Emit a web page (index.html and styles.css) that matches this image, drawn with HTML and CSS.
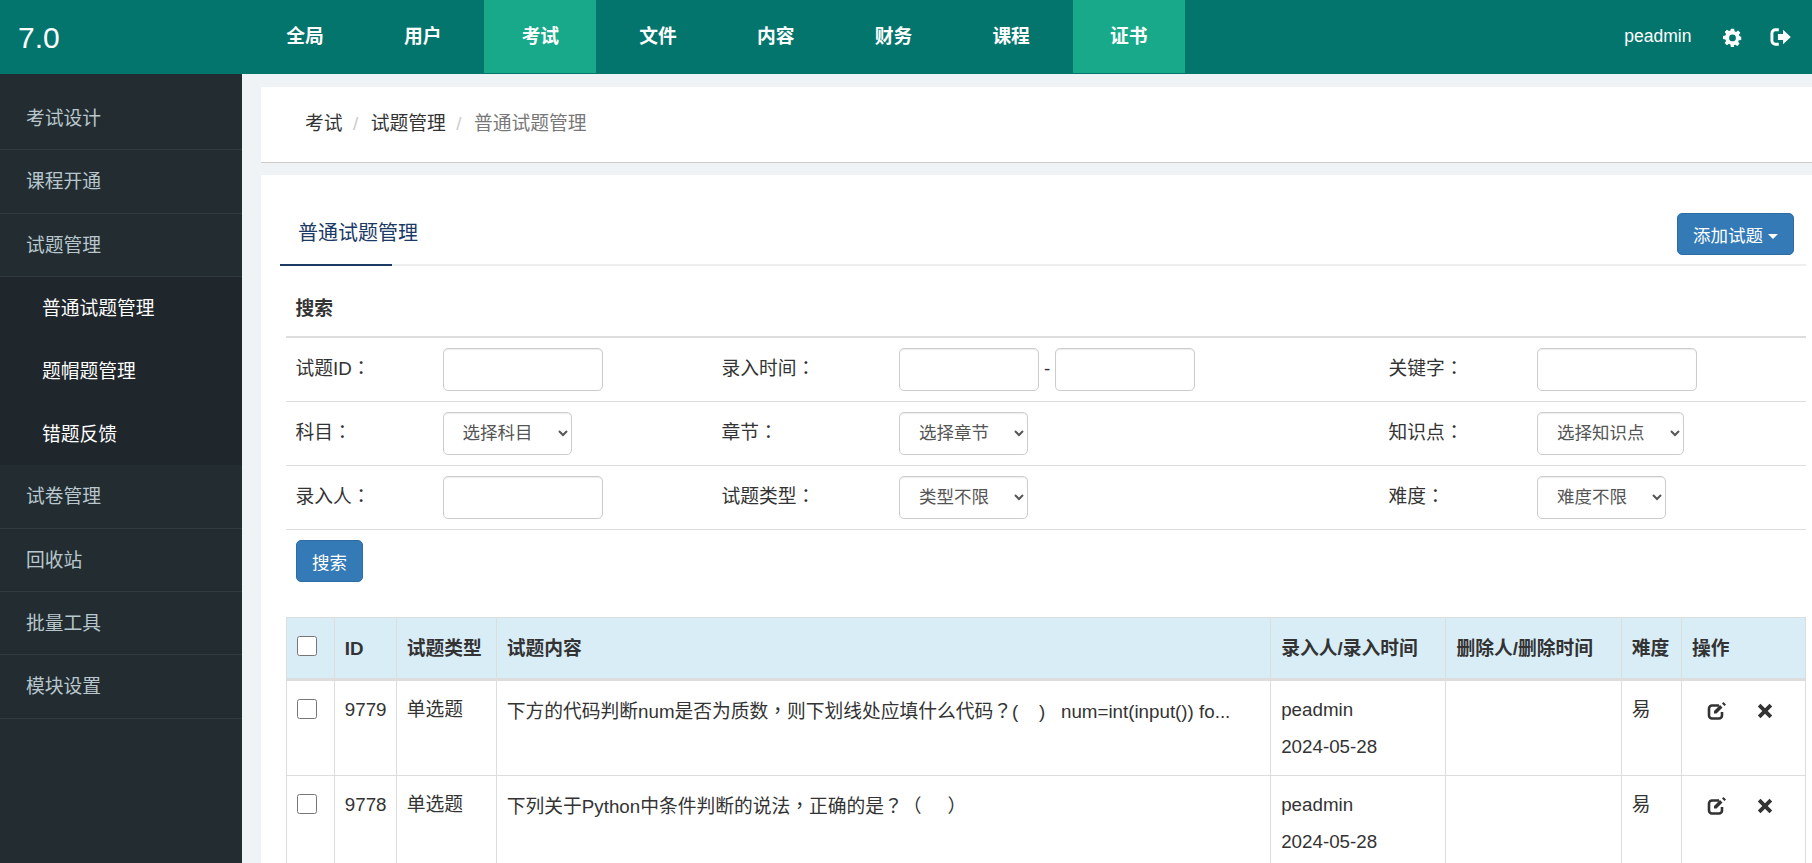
FILE: index.html
```html
<!DOCTYPE html>
<html lang="zh-CN">
<head>
  <meta charset="UTF-8" />
  <title>普通试题管理</title>
  <link rel="stylesheet" href="styles.css">
</head>
<body>

  <!-- 顶部导航 -->
  <header class="navbar">
    <a class="brand">7.0</a>
    <nav class="nav-menu">
      <a>全局</a>
      <a>用户</a>
      <a class="active">考试</a>
      <a>文件</a>
      <a>内容</a>
      <a>财务</a>
      <a>课程</a>
      <a class="active">证书</a>
    </nav>
    <div class="nav-user">
      <span class="user-name">peadmin</span>
      <svg class="nav-icon" viewBox="0 0 24 24" width="19" height="19"><path fill="#fff" fill-rule="evenodd" d="M10 1h4l.6 3.1 1.9.8 2.6-1.8 2.8 2.8-1.8 2.6.8 1.9L23 11v4l-3.1.5-.8 1.9 1.8 2.6-2.8 2.8-2.6-1.8-1.9.8L13.9 24h-4l-.5-3.2-1.9-.8-2.6 1.8-2.8-2.8 1.8-2.6-.8-1.9L0 14v-4l3.1-.6.8-1.9-1.8-2.6 2.8-2.8 2.6 1.8 1.9-.8zM12 8.2a4.3 4.3 0 1 0 0 8.6 4.3 4.3 0 0 0 0-8.6z"/></svg>
      <svg class="nav-icon" viewBox="0 0 24 21" width="21" height="18"><path fill="none" stroke="#fff" stroke-width="3.4" d="M10 2H6a4 4 0 0 0-4 4v9a4 4 0 0 0 4 4h4"/><path fill="#fff" d="M9 7h6V2l9 8.500-9 8.500v-5H9z"/></svg>
    </div>
  </header>

  <div class="layout">
    <!-- 左侧菜单 -->
    <aside class="sidebar">
      <a class="side-item">考试设计</a>
      <a class="side-item">课程开通</a>
      <a class="side-item">试题管理</a>
      <div class="side-sub">
        <a>普通试题管理</a>
        <a>题帽题管理</a>
        <a>错题反馈</a>
      </div>
      <a class="side-item">试卷管理</a>
      <a class="side-item">回收站</a>
      <a class="side-item">批量工具</a>
      <a class="side-item">模块设置</a>
    </aside>

    <main class="main">
      <div class="crumb-card">
        <a>考试</a><span class="sep">/</span><a>试题管理</a><span class="sep">/</span><span class="crumb-now">普通试题管理</span>
      </div>

      <section class="panel">
        <div class="tabs">
          <a class="tab active">普通试题管理</a>
          <button class="btn btn-add">添加试题 <span class="caret"></span></button>
        </div>

        <div class="search-title">搜索</div>
        <div class="search-grid">
          <div class="search-row">
            <label>试题ID<span class="punct">：</span></label>
            <div class="cell"><input class="field" type="text"></div>
            <label>录入时间<span class="punct">：</span></label>
            <div class="cell"><input class="field field-date" type="text"><span class="dash">-</span><input class="field field-date" type="text"></div>
            <label>关键字<span class="punct">：</span></label>
            <div class="cell"><input class="field" type="text"></div>
          </div>
          <div class="search-row">
            <label>科目<span class="punct">：</span></label>
            <div class="cell"><select class="field sel-w1"><option>选择科目</option></select></div>
            <label>章节<span class="punct">：</span></label>
            <div class="cell"><select class="field sel-w1"><option>选择章节</option></select></div>
            <label>知识点<span class="punct">：</span></label>
            <div class="cell"><select class="field sel-w2"><option>选择知识点</option></select></div>
          </div>
          <div class="search-row">
            <label>录入人<span class="punct">：</span></label>
            <div class="cell"><input class="field" type="text"></div>
            <label>试题类型<span class="punct">：</span></label>
            <div class="cell"><select class="field sel-w1"><option>类型不限</option></select></div>
            <label>难度<span class="punct">：</span></label>
            <div class="cell"><select class="field sel-w1"><option>难度不限</option></select></div>
          </div>
        </div>
        <button class="btn btn-search">搜索</button>

        <table class="q-table">
          <colgroup>
            <col class="c-check"><col class="c-id"><col class="c-type"><col class="c-body">
            <col class="c-who"><col class="c-who"><col class="c-level"><col class="c-ops">
          </colgroup>
          <thead>
            <tr>
              <th><input class="check" type="checkbox"></th>
              <th>ID</th>
              <th>试题类型</th>
              <th>试题内容</th>
              <th>录入人/录入时间</th>
              <th>删除人/删除时间</th>
              <th>难度</th>
              <th>操作</th>
            </tr>
          </thead>
          <tbody>
            <tr>
              <td><input class="check" type="checkbox"></td>
              <td>9779</td>
              <td>单选题</td>
              <td>下方的代码判断num是否为质数<span class="punct">，</span>则下划线处应填什么代码<span class="punct">？</span>(&nbsp;&nbsp;&nbsp;&nbsp;) &nbsp;&nbsp;num=int(input()) fo...</td>
              <td>peadmin<br>2024-05-28</td>
              <td></td>
              <td>易</td>
              <td class="ops">
                <svg viewBox="0 0 20 18" width="20" height="18"><path fill="none" stroke="#333" stroke-width="2.600" d="M12 3.500H5a3 3 0 0 0-3 3v7a3 3 0 0 0 3 3h7a3 3 0 0 0 3-3V10"/><path fill="#333" d="M7 9l6-6 2.500 2.500-6 6H7zM15 1.500l1.500-1.500L19 2.500l-1.500 1.500z"/></svg>
                <svg viewBox="0 0 16 16" width="16" height="16"><path fill="#333" d="M3.500.8L8 5.300 12.500.8l2.700 2.700L10.700 8l4.500 4.500-2.700 2.700L8 10.700l-4.500 4.500-2.700-2.700L5.300 8 .8 3.500z"/></svg>
              </td>
            </tr>
            <tr>
              <td><input class="check" type="checkbox"></td>
              <td>9778</td>
              <td>单选题</td>
              <td>下列关于Python中条件判断的说法<span class="punct">，</span>正确的是<span class="punct">？</span>（&nbsp;&nbsp;&nbsp;&nbsp;&nbsp;）</td>
              <td>peadmin<br>2024-05-28</td>
              <td></td>
              <td>易</td>
              <td class="ops">
                <svg viewBox="0 0 20 18" width="20" height="18"><path fill="none" stroke="#333" stroke-width="2.600" d="M12 3.500H5a3 3 0 0 0-3 3v7a3 3 0 0 0 3 3h7a3 3 0 0 0 3-3V10"/><path fill="#333" d="M7 9l6-6 2.500 2.500-6 6H7zM15 1.500l1.500-1.500L19 2.500l-1.500 1.500z"/></svg>
                <svg viewBox="0 0 16 16" width="16" height="16"><path fill="#333" d="M3.500.8L8 5.300 12.500.8l2.700 2.700L10.700 8l4.500 4.500-2.700 2.700L8 10.700l-4.500 4.500-2.700-2.700L5.300 8 .8 3.500z"/></svg>
              </td>
            </tr>
          </tbody>
        </table>
      </section>
    </main>
  </div>

</body>
</html>
```

FILE: styles.css
```css
:root {
  --teal: #03756d;
  --teal-on: #17a98a;
  --side: #232d31;
  --side-sub: #1f262c;
  --side-line: #2f3b3d;
  --page: #eff3f6;
  --line: #ddd;
  --blue: #337ab7;
}

* {
  box-sizing: border-box;
}

html, body {
  height: 100%;
}

body {
  margin: 0;
  overflow: hidden;
  font-family: "Liberation Sans", "Noto Sans CJK SC", sans-serif;
  font-size: 18.75px;
  line-height: 1.43;
  color: #333;
  background-color: var(--page);
}

/* centred full-width punctuation */
.punct {
  font-family: "Noto Sans CJK TC", sans-serif;
  font-feature-settings: "locl" 0;
}

/* navbar */
.navbar {
  display: flex;
  height: 74px;
  background-color: var(--teal);
  color: #fff;
}

.brand {
  width: 249px;
  padding-left: 18px;
  font-size: 30px;
  line-height: 76px;
}

.nav-menu {
  display: flex;
  gap: 5.7px;
  height: 73px;
}

.nav-menu a {
  width: 112px;
  text-align: center;
  font-weight: bold;
  line-height: 73px;
}

.nav-menu a.active {
  background-color: var(--teal-on);
}

.nav-user {
  display: flex;
  align-items: center;
  margin-left: auto;
  padding-right: 21px;
}

.user-name {
  margin-right: 31px;
  font-size: 17.5px;
}

.nav-icon + .nav-icon {
  margin-left: 28.5px;
}

/* sidebar */
.layout {
  display: flex;
  height: calc(100% - 74px);
}

.sidebar {
  flex: 0 0 242px;
  padding-top: 13px;
  background-color: var(--side);
  color: #b8c7ce;
}

.side-item {
  display: block;
  height: 63.4px;
  padding-left: 26px;
  line-height: 63px;
  border-bottom: 1px solid var(--side-line);
}

.side-sub {
  background-color: var(--side-sub);
  color: #fff;
}

.side-sub a {
  display: block;
  height: 62.700px;
  padding-left: 42px;
  line-height: 63.700px;
}

/* main */
.main {
  flex: 1;
  min-width: 0;
  padding: 13px 0 0 19px;
}

.crumb-card {
  height: 76px;
  padding-left: 44px;
  line-height: 74px;
  background-color: #fff;
  border-bottom: 1px solid #ccc;
}

.sep {
  padding: 0 12.5px 0 10.5px;
  color: #ccc;
}

.crumb-now {
  color: #777;
}

.panel {
  margin-top: 12px;
  padding: 33px 6px 0 19px;
  min-height: 800px;
  background-color: #fff;
}

.tabs {
  display: flex;
  justify-content: space-between;
  align-items: flex-start;
  height: 58px;
  padding: 5px 12px 0 0;
  border-bottom: 2px solid #eee;
}

.tab {
  width: 112px;
  height: 58px;
  margin-top: -5px;
  padding-left: 18px;
  font-size: 20px;
  white-space: nowrap;
  color: #1b3a66;
  border-bottom: 2px solid #1b3a66;
  line-height: 50px;
}

.btn {
  height: 42px;
  padding: 0 15px;
  font-family: inherit;
  font-size: 17.5px;
  color: #fff;
  background-color: var(--blue);
  border: 1px solid #2e6da4;
  border-radius: 5px;
}

.btn-add {
  width: 117px;
  padding: 0;
}

.caret {
  display: inline-block;
  vertical-align: middle;
  border-top: 5px solid #fff;
  border-left: 5px solid transparent;
  border-right: 5px solid transparent;
}

/* search */
.search-title {
  height: 72px;
  margin-left: 6px;
  padding: 30px 10px 0 9.5px;
  font-weight: bold;
  border-bottom: 2px solid var(--line);
}

.search-grid {
  margin-left: 6px;
}

.search-row {
  display: grid;
  grid-template-columns: 146.5px 279.5px 177px 490px 148px 1fr;
  height: 64px;
  border-bottom: 1px solid var(--line);
}

.search-row label {
  padding: 16px 0 0 9.5px;
}

.cell {
  display: flex;
  align-items: flex-start;
  padding: 10px;
}

.field {
  width: 160px;
  height: 42.500px;
  padding: 6px 15px;
  font-family: inherit;
  font-size: 17.5px;
  color: #555;
  background-color: #fff;
  border: 1px solid #ccc;
  border-radius: 5px;
  box-shadow: inset 0 1px 1px rgba(0, 0, 0, .075);
}

.field-date {
  width: 140px;
}

.dash {
  padding: 8px 5px 0;
  line-height: 1.43;
}

.sel-w1 {
  width: 129px;
}

.sel-w2 {
  width: 147px;
}

.btn-search {
  display: block;
  width: 67px;
  margin: 10px 0 34.5px 16px;
  padding: 0;
}

/* table */
.q-table {
  width: 1520px;
  margin-left: 6px;
  table-layout: fixed;
  border-collapse: collapse;
}

.c-check { width: 47.8px; }
.c-id { width: 62px; }
.c-type { width: 100px; }
.c-body { width: 774.400px; }
.c-who { width: 175.300px; }
.c-level { width: 60.200px; }

.q-table th,
.q-table td {
  padding: 10px;
  text-align: left;
  vertical-align: top;
  border: 1px solid var(--line);
}

.q-table th {
  height: 62px;
  padding-top: 18px;
  white-space: nowrap;
  background-color: #d9edf7;
  border-bottom: 3px solid var(--line);
}

.q-table td {
  height: 96px;
  line-height: 37px;
  white-space: nowrap;
}

.q-table td:nth-child(-n+4),
.q-table td:nth-child(7) {
  line-height: 27px;
  padding-top: 15px;
}

.q-table td:first-child {
  padding-top: 18px;
}

.check {
  display: block;
  width: 20px;
  height: 20px;
  margin: 0;
}

.ops {
  padding-left: 25px !important;
}

.ops svg {
  vertical-align: middle;
  margin-right: 25px;
}
```
